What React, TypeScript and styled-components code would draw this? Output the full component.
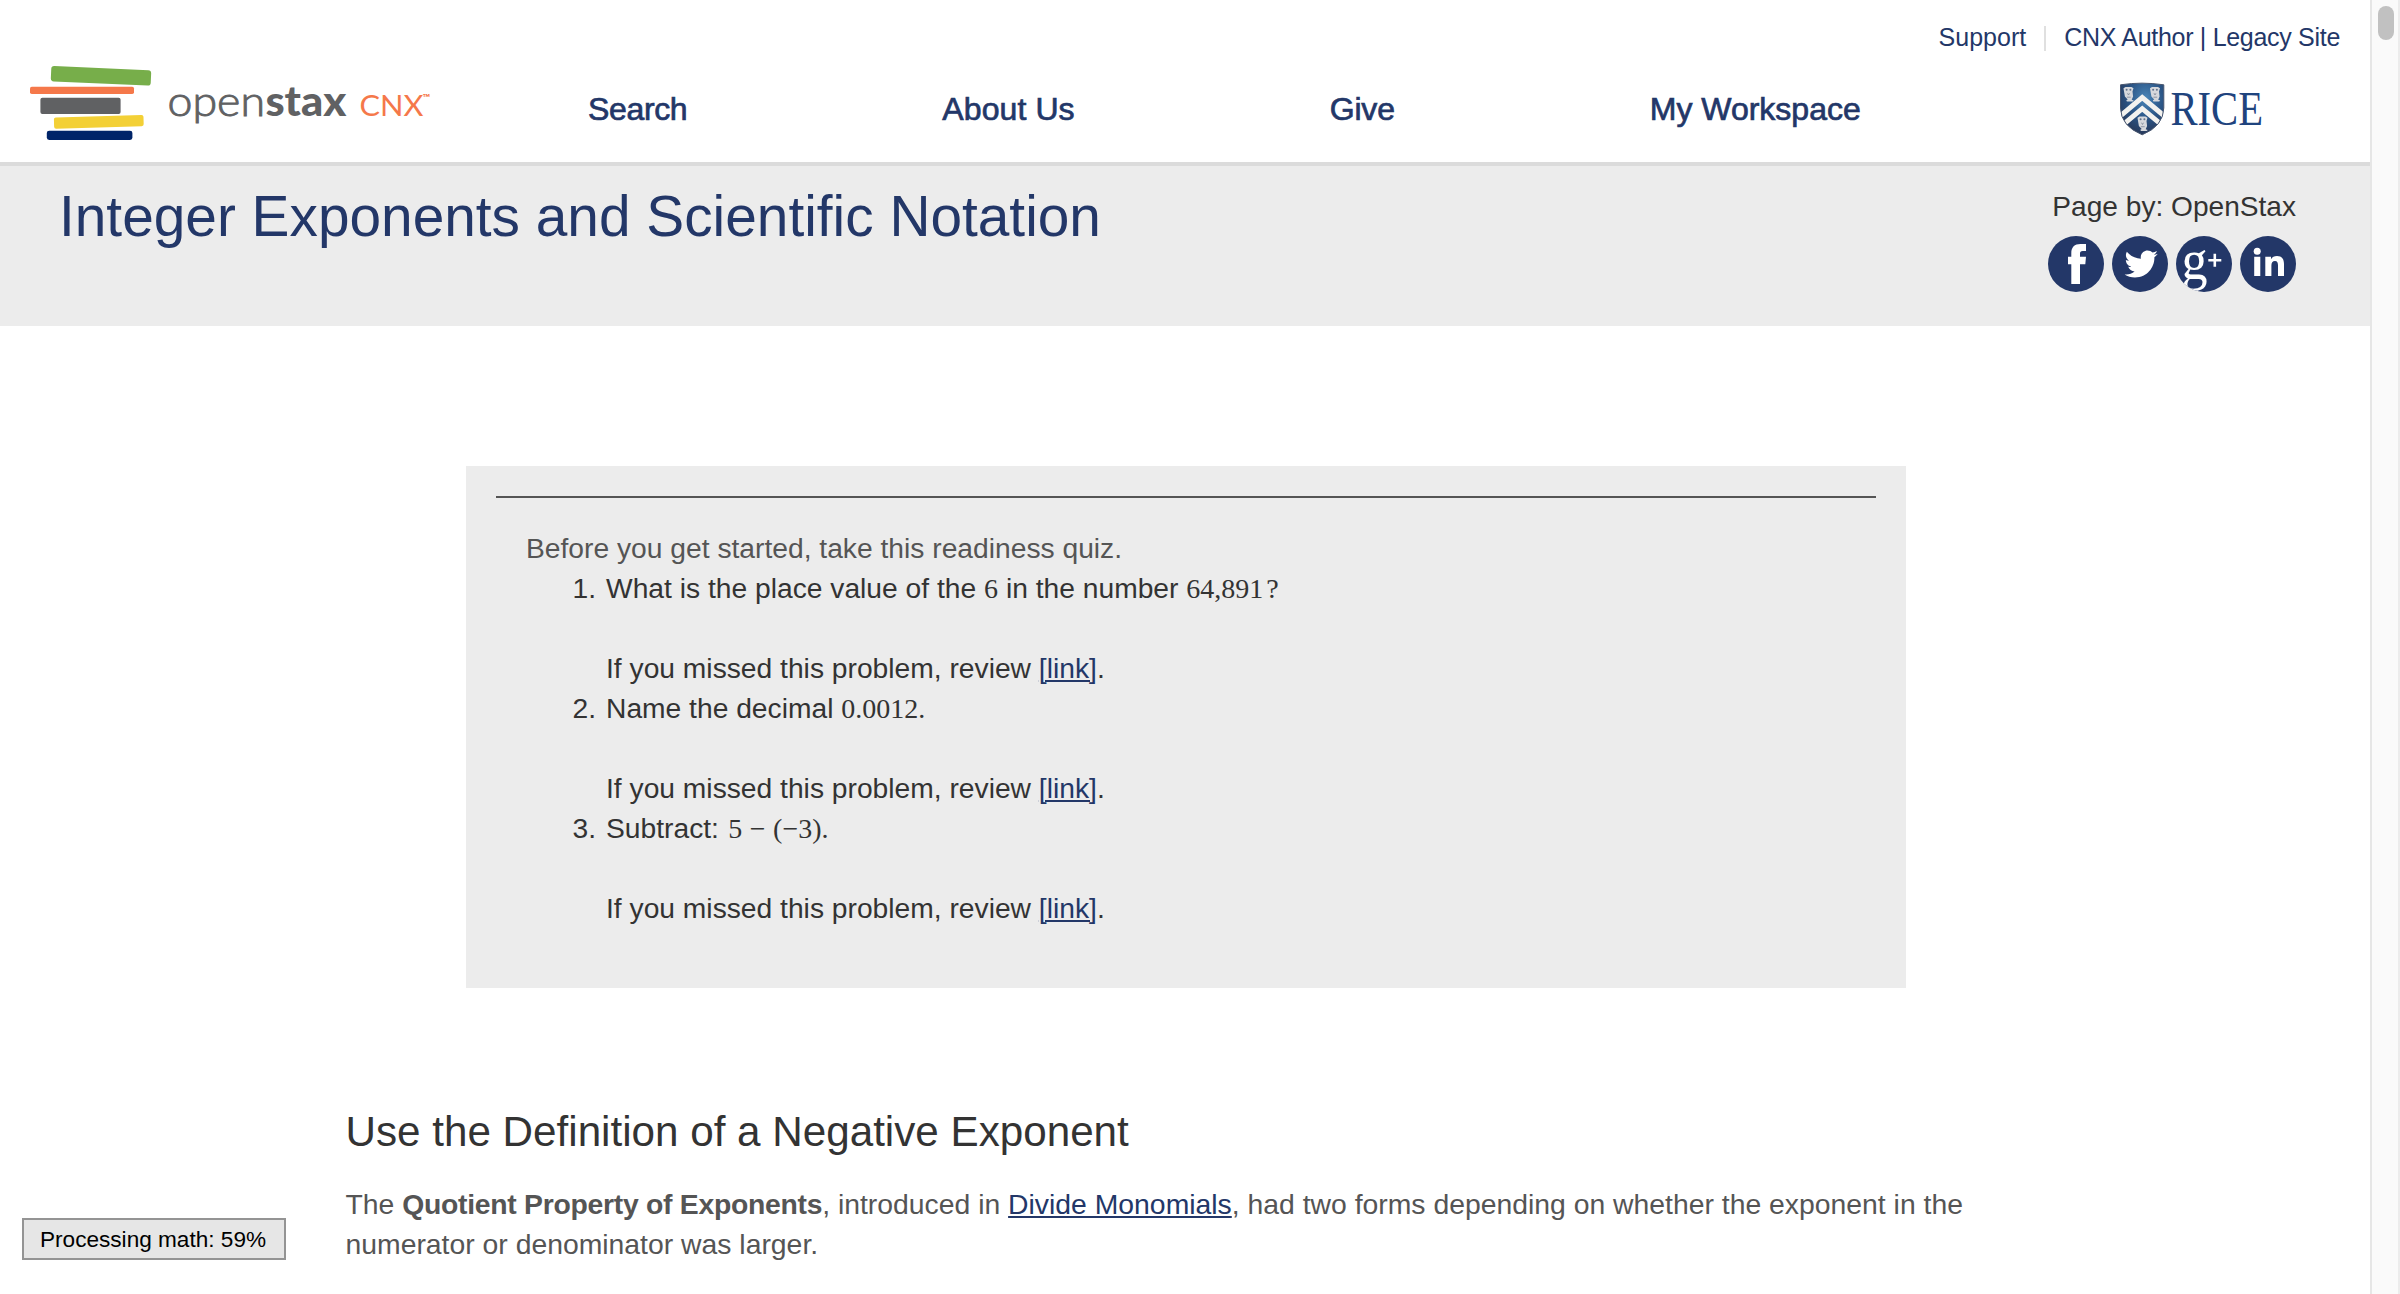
import React from "react";
import styled, { createGlobalStyle } from "styled-components";
import { FaTwitter } from "react-icons/fa";

const navy = "#233768";
const sans = `"Liberation Sans", Arial, sans-serif`;
const serif = `"Liberation Serif", "Times New Roman", serif`;

const GlobalStyle = createGlobalStyle`
  html, body { margin: 0; padding: 0; background: #fff; overflow: hidden; }
  * { box-sizing: border-box; }
  body { font-family: ${sans}; }
  a { color: ${navy}; }
`;

const Window = styled.div`
  display: flex;
  width: 2400px;
  height: 1294px;
  overflow: hidden;
`;

const Page = styled.div`
  flex: 1;
  min-width: 0;
`;

const ScrollTrack = styled.div`
  width: 30px;
  padding: 6px 4px 0 6px;
  background: #fafafa;
  border-left: 2px solid #e6e6e6;
  border-right: 2px solid #ececec;
`;

const ScrollThumb = styled.div`
  width: 16px;
  height: 34px;
  border-radius: 8px;
  background: #c1c1c1;
`;

const Header = styled.header`
  height: 166px;
  border-bottom: 4px solid #dbdbdb;
`;

const TopLinks = styled.div`
  display: flex;
  justify-content: flex-end;
  height: 52px;
  padding: 22px 30px 0 0;
`;

const TopLink = styled.a<{ $tracking?: number }>`
  font-size: 25px;
  line-height: 30px;
  letter-spacing: ${(p) => p.$tracking ?? 0}px;
  text-decoration: none;
  white-space: nowrap;
`;

const Divider = styled.span`
  width: 2px;
  height: 25px;
  margin: 4px 18px 0 18px;
  background: #e0e0e0;
`;

const MainRow = styled.div`
  display: flex;
  align-items: flex-start;
  padding: 14px 0 0 30px;
`;

const Nav = styled.nav`
  display: flex;
  gap: 255px;
  margin: 23px 0 0 157px;
`;

const NavLink = styled.a<{ $tracking: number }>`
  font-size: 32px;
  line-height: 40px;
  letter-spacing: ${(p) => p.$tracking}px;
  text-decoration: none;
  white-space: nowrap;
  -webkit-text-stroke: 0.7px ${navy};
`;

const RiceSlot = styled.div`
  display: flex;
  margin: 16px 0 0 258px;
`;

const TitleBand = styled.section`
  display: flex;
  justify-content: space-between;
  height: 160px;
  padding: 19px 74px 0 59px;
  background: #ececec;
`;

const Title = styled.h1`
  margin: 0;
  font-size: 56.8px;
  line-height: 64px;
  font-weight: 400;
  color: ${navy};
`;

const Author = styled.div`
  display: flex;
  flex-direction: column;
  align-items: flex-end;
  padding-top: 2px;
`;

const Byline = styled.div`
  font-size: 28.1px;
  line-height: 40px;
  color: #333;
`;

const Socials = styled.div`
  display: flex;
  gap: 8px;
  margin-top: 9px;
`;

const SocialButton = styled.a`
  display: flex;
  width: 56px;
  height: 56px;
  border-radius: 50%;
  overflow: hidden;
  background: ${navy};
`;

const Quiz = styled.section`
  width: 1440px;
  height: 522px;
  margin: 140px 0 0 466px;
  padding: 30px;
  background: #ececec;
`;

const QuizBody = styled.div`
  padding: 30px;
  border-top: 2px solid #555;
  font-size: 28.22px;
  line-height: 40px;
`;

const QuizIntro = styled.p`
  margin: 0;
  color: #555;
`;

const Questions = styled.ol`
  margin: 0;
  padding: 0;
  list-style: none;
  color: #333;
`;

const Question = styled.li`
  display: grid;
  grid-template-columns: 70px auto;
  column-gap: 10px;
`;

const Marker = styled.span`
  text-align: right;
`;

const Line = styled.p`
  height: 40px;
  margin: 0;
  white-space: nowrap;
`;

const Review = styled(Line)`
  grid-column: 2;
  margin-top: 40px;
`;

const TextLink = styled.a`
  text-decoration-thickness: 2px;
  text-underline-offset: 2px;
`;

const MathText = styled.span<{ $before?: number }>`
  margin-left: ${(p) => p.$before ?? 0}px;
  font-family: ${serif};
  font-size: 28px;
  line-height: 1;
`;

const Article = styled.article`
  width: 1684px;
  margin: 120px 0 0 345.5px;
`;

const Heading = styled.h2`
  margin: 0;
  font-size: 42.2px;
  line-height: 48px;
  font-weight: 400;
  color: #333;
`;

const Paragraph = styled.p`
  margin: 28px 0 0;
  font-size: 28.35px;
  line-height: 40px;
  color: #555;
`;

const Term = styled.strong`
  letter-spacing: -0.28px;
`;

const MathStatus = styled.div`
  position: absolute;
  left: 22px;
  top: 1218px;
  width: 264px;
  height: 42px;
  padding-left: 16px;
  border: 2px solid #949494;
  background: #e6e6e6;
  font-size: 22.6px;
  line-height: 40px;
  white-space: nowrap;
  color: #000;
`;

const OpenStaxLogo = () => (
  <svg width="401" height="76" viewBox="30 66 401 76">
    <rect x="-50" y="-7.7" width="100" height="15.4" rx="3" fill="#77ae4a" transform="translate(101 75.8) rotate(2.5)" />
    <rect x="30" y="86.8" width="104" height="7.2" rx="1.8" fill="#f5784a" />
    <rect x="40.4" y="97.8" width="80.2" height="16.2" rx="2" fill="#606163" />
    <rect x="-44.8" y="-5.6" width="89.6" height="11.2" rx="2" fill="#f3d036" transform="translate(98.8 121.8) rotate(-1.7)" />
    <rect x="46.8" y="130.7" width="85.6" height="9.3" rx="2.4" fill="#002469" />
    <g fontFamily="Lato, sans-serif" fill="#606163">
      <text x="167.5" y="116.2" fontSize="41" fontWeight="300" stroke="#606163" strokeWidth=".9" textLength="97.5" lengthAdjust="spacingAndGlyphs">open</text>
      <text x="265.4" y="116.2" fontSize="41" fontWeight="900" textLength="81" lengthAdjust="spacingAndGlyphs">stax</text>
      <text x="359.5" y="116" fontSize="29" fill="#f5784a" textLength="64" lengthAdjust="spacingAndGlyphs">CNX</text>
      <text x="422.8" y="101" fontSize="10" fontWeight="700" fill="#f5784a" textLength="7.500" lengthAdjust="spacingAndGlyphs">™</text>
    </g>
  </svg>
);

const Owl = ({ x, y }: { x: number; y: number }) => (
  <g transform={`translate(${x} ${y})`}>
    <path
      d="M0 1.2 2 0h6l2 1.2-1 3.4.6 5-1.4 3.2 2 .6-1 1H3.4l-.6-1.2 1.4-.6L1.4 9.6.6 5Z"
      fill="#d6d8dc"
    />
    <circle cx="3.1" cy="2.8" r="1" fill="#63738c" />
    <circle cx="6.9" cy="2.8" r="1" fill="#63738c" />
    <path d="M4 6.2 5 8l1-1.8M3.4 10.2h3.8" stroke="#7d8797" strokeWidth=".8" fill="none" />
  </g>
);

const shieldPath = "M2119.5 84.8Q2141 81.5 2162.8 84.8V108Q2162.5 126 2141.2 134.8 2119.8 126 2119.5 108Z";

const RiceLogo = () => (
  <svg width="150" height="56" viewBox="2118 82 150 56">
    <defs>
      <radialGradient id="shield" cx="0.58" cy="0.3" r="0.75">
        <stop offset="0" stopColor="#4a86b8" />
        <stop offset="0.5" stopColor="#2b5586" />
        <stop offset="1" stopColor="#27324f" />
      </radialGradient>
      <clipPath id="shieldClip">
        <path d={shieldPath} />
      </clipPath>
    </defs>
    <g clipPath="url(#shieldClip)">
      <rect x="2118" y="82" width="46" height="54" fill="url(#shield)" />
      <path
        d="M2115 119.5 2141.2 97.5 2167.5 119.5M2115 130.5 2141.2 108.7 2167.5 130.5"
        stroke="#f3f2ef"
        strokeWidth="5"
        fill="none"
      />
    </g>
    <path d={shieldPath} fill="none" stroke="#48566f" strokeWidth="1" />
    <Owl x={2122.5} y={87} />
    <Owl x={2149} y={87} />
    <Owl x={2136.5} y={116.5} />
    <text
      x="2169.5"
      y="124.5"
      fontFamily={serif}
      fontSize="48.6"
      fill="#1f447e"
      textLength="92.5"
      lengthAdjust="spacingAndGlyphs"
    >
      RICE
    </text>
  </svg>
);

const FacebookIcon = () => (
  <svg width="56" height="56" fill="#fff">
    <path d="M23.3 48V28.2H20V20.7h3.3v-3.5C23.3 11.2 26.5 8 32.5 8H38v7h-3.2c-2.2 0-2.8 1-2.8 2.8v2.9h6l-.7 7.5H32V48Z" />
  </svg>
);

const TwitterIcon = () => (
  <svg width="56" height="56">
    <FaTwitter x="12.5" y="11.3" size={33.3} color="#fff" />
  </svg>
);

const GooglePlusIcon = () => (
  <svg width="56" height="56" fill="#fff">
    <text x="5.5" y="43" fontFamily={serif} fontSize="56" textLength="26" lengthAdjust="spacingAndGlyphs">
      g
    </text>
    <path d="M32.3 24.2h13M38.8 17.7v13" stroke="#fff" strokeWidth="2.6" />
  </svg>
);

const LinkedInIcon = () => (
  <svg width="56" height="56" fill="#fff">
    <circle cx="17.2" cy="15.3" r="3.5" />
    <path d="M14.2 20.7h6.1V40h-6.1ZM25.3 20.7h5.7v2.6c1.2-2 3.2-3.2 6-3.2 5 0 7 3.2 7 8V40h-6V29.5c0-2.7-.7-4.5-3-4.5-2.6 0-3.6 1.9-3.6 4.7V40h-6.1Z" />
  </svg>
);

const navItems = [
  { label: "Search", tracking: -0.35 },
  { label: "About Us", tracking: 0.1 },
  { label: "Give", tracking: -0.2 },
  { label: "My Workspace", tracking: 0 },
];
const socialIcons = [FacebookIcon, TwitterIcon, GooglePlusIcon, LinkedInIcon];

const questions: React.ReactNode[] = [
  <>
    What is the place value of the <MathText>6</MathText> in the number <MathText>64,891</MathText>
    <MathText $before={3}>?</MathText>
  </>,
  <>
    Name the decimal <MathText>0.0012.</MathText>
  </>,
  <>
    Subtract: <MathText $before={1.5}>5</MathText>
    <MathText $before={7.5}>−</MathText>
    <MathText $before={7.5}>(−3).</MathText>
  </>,
];

export default function App() {
  return (
    <Window>
      <GlobalStyle />
      <Page>
        <Header>
          <TopLinks>
            <TopLink>Support</TopLink>
            <Divider />
            <TopLink $tracking={-0.3}>CNX Author | Legacy Site</TopLink>
          </TopLinks>
          <MainRow>
            <OpenStaxLogo />
            <Nav>
              {navItems.map((item) => (
                <NavLink key={item.label} $tracking={item.tracking}>
                  {item.label}
                </NavLink>
              ))}
            </Nav>
            <RiceSlot>
              <RiceLogo />
            </RiceSlot>
          </MainRow>
        </Header>
        <TitleBand>
          <Title>Integer Exponents and Scientific Notation</Title>
          <Author>
            <Byline>Page by: OpenStax</Byline>
            <Socials>
              {socialIcons.map((Icon, i) => (
                <SocialButton key={i}>
                  <Icon />
                </SocialButton>
              ))}
            </Socials>
          </Author>
        </TitleBand>
        <Quiz>
          <QuizBody>
            <QuizIntro>Before you get started, take this readiness quiz.</QuizIntro>
            <Questions>
              {questions.map((question, i) => (
                <Question key={i}>
                  <Marker>{i + 1}.</Marker>
                  <Line>{question}</Line>
                  <Review>
                    If you missed this problem, review <TextLink href="#">[link]</TextLink>.
                  </Review>
                </Question>
              ))}
            </Questions>
          </QuizBody>
        </Quiz>
        <Article>
          <Heading>Use the Definition of a Negative Exponent</Heading>
          <Paragraph>
            The <Term>Quotient Property of Exponents</Term>, introduced in{" "}
            <TextLink href="#">Divide Monomials</TextLink>, had two forms depending on whether the exponent in the
            numerator or denominator was larger.
          </Paragraph>
        </Article>
      </Page>
      <ScrollTrack>
        <ScrollThumb />
      </ScrollTrack>
      <MathStatus>Processing math: 59%</MathStatus>
    </Window>
  );
}
